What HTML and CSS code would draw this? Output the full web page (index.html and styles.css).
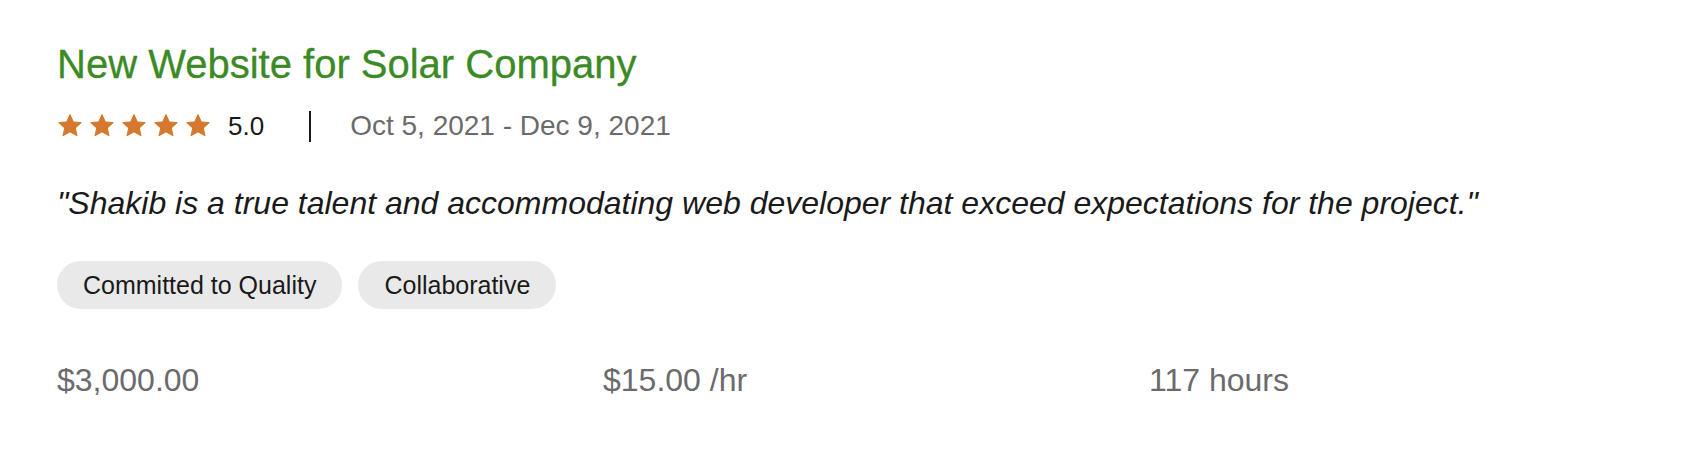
FILE: index.html
```html
<!DOCTYPE html>
<html lang="en">
<head>
<meta charset="utf-8">
<title>Work history</title>
<link rel="stylesheet" href="styles.css">
</head>
<body>
<section class="job">
  <h2 class="job-title">New Website for Solar Company</h2>
  <div class="meta">
    <div class="stars">
      <svg class="star" viewBox="0 0 24 24"><path d="M12 1.6l3.05 6.6 7.15.75-5.35 4.85 1.5 7.1L12 17.3l-6.35 3.6 1.5-7.1-5.35-4.85 7.15-.75z" stroke-linejoin="round"/></svg>
      <svg class="star" viewBox="0 0 24 24"><path d="M12 1.6l3.05 6.6 7.15.75-5.35 4.85 1.5 7.1L12 17.3l-6.35 3.6 1.5-7.1-5.35-4.85 7.15-.75z" stroke-linejoin="round"/></svg>
      <svg class="star" viewBox="0 0 24 24"><path d="M12 1.6l3.05 6.6 7.15.75-5.35 4.85 1.5 7.1L12 17.3l-6.35 3.6 1.5-7.1-5.35-4.85 7.15-.75z" stroke-linejoin="round"/></svg>
      <svg class="star" viewBox="0 0 24 24"><path d="M12 1.6l3.05 6.6 7.15.75-5.35 4.85 1.5 7.1L12 17.3l-6.35 3.6 1.5-7.1-5.35-4.85 7.15-.75z" stroke-linejoin="round"/></svg>
      <svg class="star" viewBox="0 0 24 24"><path d="M12 1.6l3.05 6.6 7.15.75-5.35 4.85 1.5 7.1L12 17.3l-6.35 3.6 1.5-7.1-5.35-4.85 7.15-.75z" stroke-linejoin="round"/></svg>
    </div>
    <span class="score">5.0</span>
    <span class="divider"></span>
    <span class="dates">Oct 5, 2021 - Dec 9, 2021</span>
  </div>
  <p class="quote">"Shakib is a true talent and accommodating web developer that exceed expectations for the project."</p>
  <div class="tags">
    <span class="tag">Committed to Quality</span>
    <span class="tag">Collaborative</span>
  </div>
  <div class="stats">
    <span class="stat">$3,000.00</span>
    <span class="stat">$15.00 /hr</span>
    <span class="stat">117 hours</span>
  </div>
</section>
</body>
</html>
```

FILE: styles.css
```css
html, body {
  margin: 0;
  padding: 0;
  background: #ffffff;
}

body {
  font-family: "Liberation Sans", Arial, Helvetica, sans-serif;
  color: #1a1a1a;
}

.job {
  padding: 40px 57px 0 57px;
}

.job-title {
  margin: 0;
  font-size: 40px;
  line-height: 48px;
  font-weight: 400;
  color: #3b8a25;
  -webkit-text-stroke: 0.3px #3b8a25;
}

.meta {
  display: flex;
  align-items: center;
  height: 32px;
  margin-top: 22px;
}

.stars {
  display: flex;
  gap: 6px;
}

.star {
  width: 26px;
  height: 26px;
  fill: #d4792e;
  stroke: #d4792e;
  stroke-width: 1px;
}

.score {
  margin-left: 17px;
  font-size: 26px;
  color: #181818;
}

.divider {
  width: 2px;
  height: 31px;
  background: #1a1a1a;
  margin-left: 45px;
}

.dates {
  margin-left: 39px;
  font-size: 28px;
  color: #6b6b6b;
}

.quote {
  margin: 42px 0 0 0;
  font-size: 32px;
  line-height: 38px;
  font-style: italic;
  color: #1a1a1a;
}

.tags {
  display: flex;
  gap: 16px;
  margin-top: 39px;
}

.tag {
  display: inline-flex;
  align-items: center;
  height: 48px;
  padding: 0 26px;
  border-radius: 24px;
  background: #e9e9e9;
  font-size: 25px;
  color: #1a1a1a;
}

.stats {
  display: grid;
  grid-template-columns: repeat(3, 1fr);
  column-gap: 60px;
  margin-top: 53px;
}

.stat {
  font-size: 32px;
  line-height: 36px;
  color: #6b6b6b;
}
```
